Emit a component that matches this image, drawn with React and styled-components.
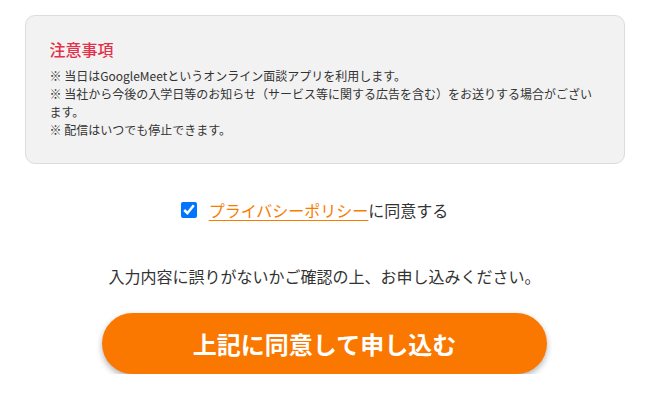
import React from 'react'
import styled, { createGlobalStyle } from 'styled-components'

const GlobalStyle = createGlobalStyle`
  body {
    margin: 0;
    background: #fff;
    font-family: "Noto Sans CJK JP", "Noto Sans", sans-serif;
    color: #333;
  }
`;

export default function App() {
  return (
    <>
      <GlobalStyle />
      <Page>
        <NoticeBox>
          <NoticeTitle>注意事項</NoticeTitle>
          <NoticeLine>※ 当日はGoogleMeetというオンライン面談アプリを利用します。</NoticeLine>
          <NoticeLine>※ 当社から今後の入学日等のお知らせ（サービス等に関する広告を含む）をお送りする場合がございます。</NoticeLine>
          <NoticeLine>※ 配信はいつでも停止できます。</NoticeLine>
        </NoticeBox>

        <AgreeRow>
          <Check type="checkbox" defaultChecked />
          <AgreeText>
            <PolicyLink href="#">プライバシーポリシー</PolicyLink>に同意する
          </AgreeText>
        </AgreeRow>

        <Confirm>入力内容に誤りがないかご確認の上、お申し込みください。</Confirm>

        <SubmitButton type="button">上記に同意して申し込む</SubmitButton>
      </Page>
    </>
  )
}

const Page = styled.div`
  display: flex;
  flex-direction: column;
  align-items: center;
  padding: 15px 25px 0;
`;

const NoticeBox = styled.div`
  box-sizing: border-box;
  width: 600px;
  background-color: #f2f2f2;
  border: 1px solid #dcdcdc;
  border-radius: 10px;
  padding: 22px 24px 24px;
`;

const NoticeTitle = styled.div`
  color: #e3304b;
  font-size: 16px;
  font-weight: 500;
  line-height: 22px;
  margin-bottom: 7px;
`;

const NoticeLine = styled.p`
  margin: 0;
  font-size: 12px;
  line-height: 18px;
  color: #333;
`;

const AgreeRow = styled.label`
  display: flex;
  align-items: center;
  gap: 12px;
  margin-top: 35px;
  margin-right: 20px;
  cursor: pointer;
`;

const Check = styled.input`
  width: 16px;
  height: 16px;
  margin: 0;
  accent-color: #0075ff;
`;

const AgreeText = styled.span`
  font-size: 16px;
  line-height: 22px;
  color: #333;
`;

const PolicyLink = styled.a`
  color: #f77c00;
  text-decoration: underline;
  text-underline-offset: 3px;
`;

const Confirm = styled.p`
  margin: 43px 0 0;
  font-size: 16px;
  line-height: 24px;
  color: #333;
`;

const SubmitButton = styled.button`
  margin-top: 25px;
  width: 445px;
  height: 61px;
  border: none;
  border-radius: 31px;
  background-color: #fa7800;
  color: #fff;
  font-family: "Noto Sans CJK JP", "Noto Sans", sans-serif;
  font-size: 24px;
  font-weight: 700;
  box-shadow: 0 3px 6px rgba(0, 0, 0, 0.3);
  cursor: pointer;
`;
